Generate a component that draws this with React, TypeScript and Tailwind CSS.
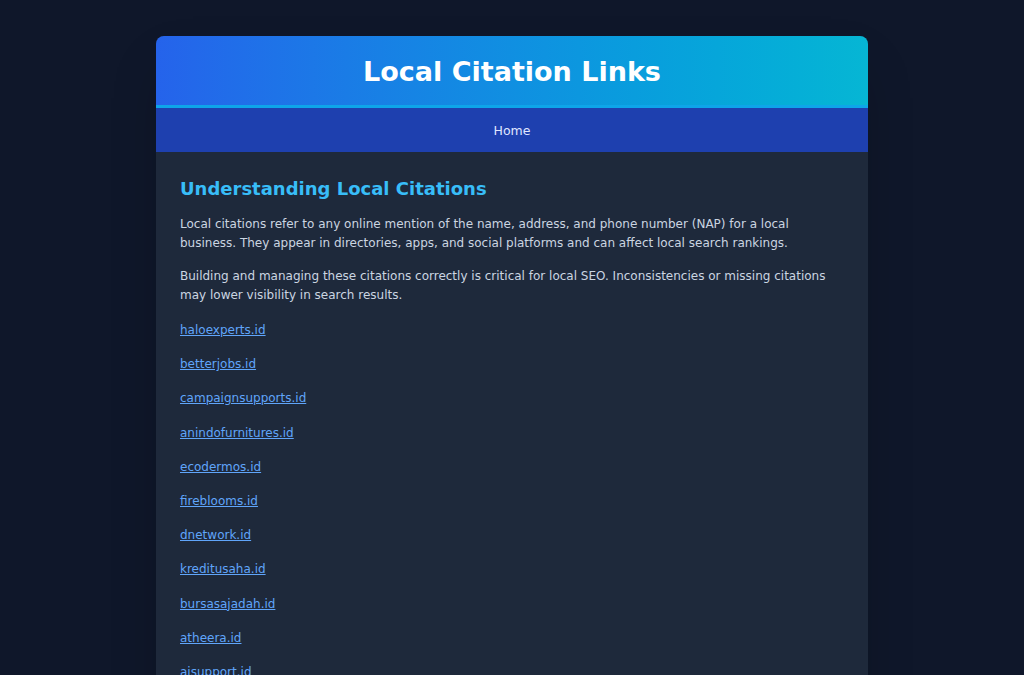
import React from "react";

const links = [
  "haloexperts.id",
  "betterjobs.id",
  "campaignsupports.id",
  "anindofurnitures.id",
  "ecodermos.id",
  "fireblooms.id",
  "dnetwork.id",
  "kreditusaha.id",
  "bursasajadah.id",
  "atheera.id",
  "aisupport.id",
  "gadgetreviews.id",
  "kontenbisnis.id",
];

export default function App() {
  return (
    <div
      className="min-h-screen bg-[#0f172a] pt-9 pb-10"
      style={{ fontFamily: '"DejaVu Sans", Verdana, sans-serif' }}
    >
      <div className="mx-auto w-[712px] overflow-hidden rounded-lg bg-[#1e293b] shadow-2xl">
        <header className="flex h-[72px] items-center justify-center border-b-[3px] border-[#0ea5e9] bg-gradient-to-r from-[#2563eb] to-[#06b6d4] pt-[2px]">
          <h1 className="text-[27px] font-bold leading-none text-white">Local Citation Links</h1>
        </header>
        <nav className="flex h-[44px] items-center justify-center bg-[#1e40af] pt-[2px]">
          <a href="#" className="text-[12.5px] font-medium text-[#e0e7ff] no-underline">Home</a>
        </nav>
        <main className="px-6 pt-[25px] pb-6">
          <h2 className="mb-[14px] text-[18px] font-bold leading-[24px] text-[#38bdf8]">
            Understanding Local Citations
          </h2>
          <p className="mb-[14px] text-[12px] leading-[19px] text-[#cbd5e1]">
            Local citations refer to any online mention of the name, address, and phone number (NAP) for a local
            business. They appear in directories, apps, and social platforms and can affect local search rankings.
          </p>
          <p className="mb-[16px] text-[12px] leading-[19px] text-[#cbd5e1]">
            Building and managing these citations correctly is critical for local SEO. Inconsistencies or missing citations
            may lower visibility in search results.
          </p>
          {links.map((l) => (
            <p key={l} className="mb-[15px] text-[12px] leading-[19.2px]">
              <a href="#" className="text-[#60a5fa] underline">{l}</a>
            </p>
          ))}
        </main>
      </div>
    </div>
  );
}
